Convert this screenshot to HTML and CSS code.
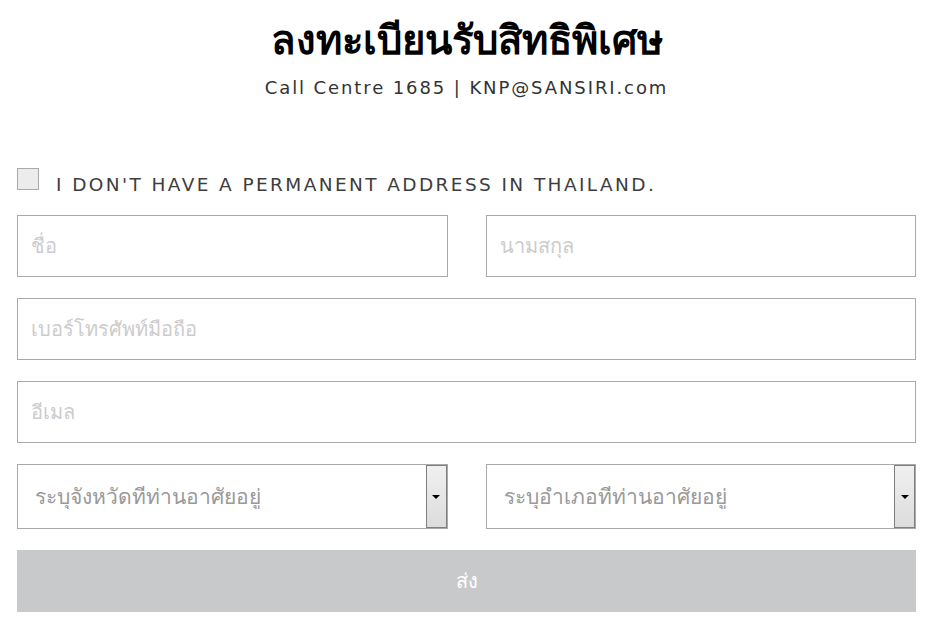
FILE: index.html
```html
<!DOCTYPE html>
<html>
<head>
  <title>ลงทะเบียนรับสิทธิพิเศษ</title>
  <link rel="stylesheet" href="styles.css">
</head>
<body>
  <header class="head">
    <h1>ลงทะเบียนรับสิทธิพิเศษ</h1>
    <p>Call Centre 1685 | KNP@SANSIRI.com</p>
  </header>

  <form class="reg">
    <label class="check">
      <input type="checkbox">
      <span class="box"></span>
      <span class="text">I DON'T HAVE A PERMANENT ADDRESS IN THAILAND.</span>
    </label>

    <div class="row two">
      <input type="text" placeholder="ชื่อ">
      <input type="text" placeholder="นามสกุล">
    </div>

    <div class="row">
      <input type="text" placeholder="เบอร์โทรศัพท์มือถือ">
    </div>

    <div class="row">
      <input type="text" placeholder="อีเมล">
    </div>

    <div class="row two">
      <div class="select">
        <select>
          <option>ระบุจังหวัดที่ท่านอาศัยอยู่</option>
        </select>
        <span class="arrow"></span>
      </div>
      <div class="select">
        <select>
          <option>ระบุอำเภอที่ท่านอาศัยอยู่</option>
        </select>
        <span class="arrow"></span>
      </div>
    </div>

    <button type="submit">ส่ง</button>
  </form>
</body>
</html>
```

FILE: styles.css
```css
html {
  background-color: #fff;
}

body {
  margin: 0;
  padding: 0 15px 0 17px;
  font-family: "DejaVu Sans", "Noto Sans", sans-serif;
  color: #333;
}

.head {
  text-align: center;
  padding-top: 15px;
}

.head h1 {
  margin: 0;
  font-size: 40px;
  line-height: 50px;
  font-weight: bold;
  color: #000;
}

.head p {
  margin: 12px 0 0;
  font-size: 18px;
  line-height: 22px;
  letter-spacing: 1.9px;
  color: #333;
}

.reg {
  display: flex;
  flex-direction: column;
  gap: 21px;
  margin-top: 69px;
}

.check {
  display: flex;
  align-items: center;
  gap: 17px;
  font-size: 18.5px;
  letter-spacing: 2.4px;
  color: #3d3d3d;
  margin-bottom: 4px;
}

.check .text {
  margin: 5px 0 -5px;
}

.check input {
  display: none;
}

.check .box {
  width: 20px;
  height: 20px;
  border: 1px solid #aaa;
  background-color: #ececec;
}

.row {
  display: grid;
  grid-template-columns: 1fr;
}

.row.two {
  grid-template-columns: 1fr 1fr;
  column-gap: 38px;
}

.row input {
  height: 62px;
  box-sizing: border-box;
  border: 1px solid #aaa;
  padding: 0 13px;
  font: 20px "DejaVu Sans", "Noto Sans", sans-serif;
  color: #333;
}

.row input::placeholder {
  color: #ccc;
}

.select {
  display: flex;
  height: 65px;
  box-sizing: border-box;
  border: 1px solid #aaa;
}

.select select {
  flex: 1;
  appearance: none;
  border: 0;
  background: #fff;
  padding: 0 17px;
  font: 21px "DejaVu Sans", "Noto Sans", sans-serif;
  color: #999;
}

.arrow {
  width: 19px;
  border: 1px solid #7f7f7f;
  background: linear-gradient(#f0f0f0, #dcdcdc);
  display: flex;
  align-items: center;
  justify-content: center;
}

.arrow::after {
  content: "";
  border-left: 4px solid transparent;
  border-right: 4px solid transparent;
  border-top: 4px solid #000;
}

.reg button {
  height: 62px;
  border: 0;
  background-color: #c8c9cb;
  color: #fff;
  font: 20px "DejaVu Sans", "Noto Sans", sans-serif;
}
```
